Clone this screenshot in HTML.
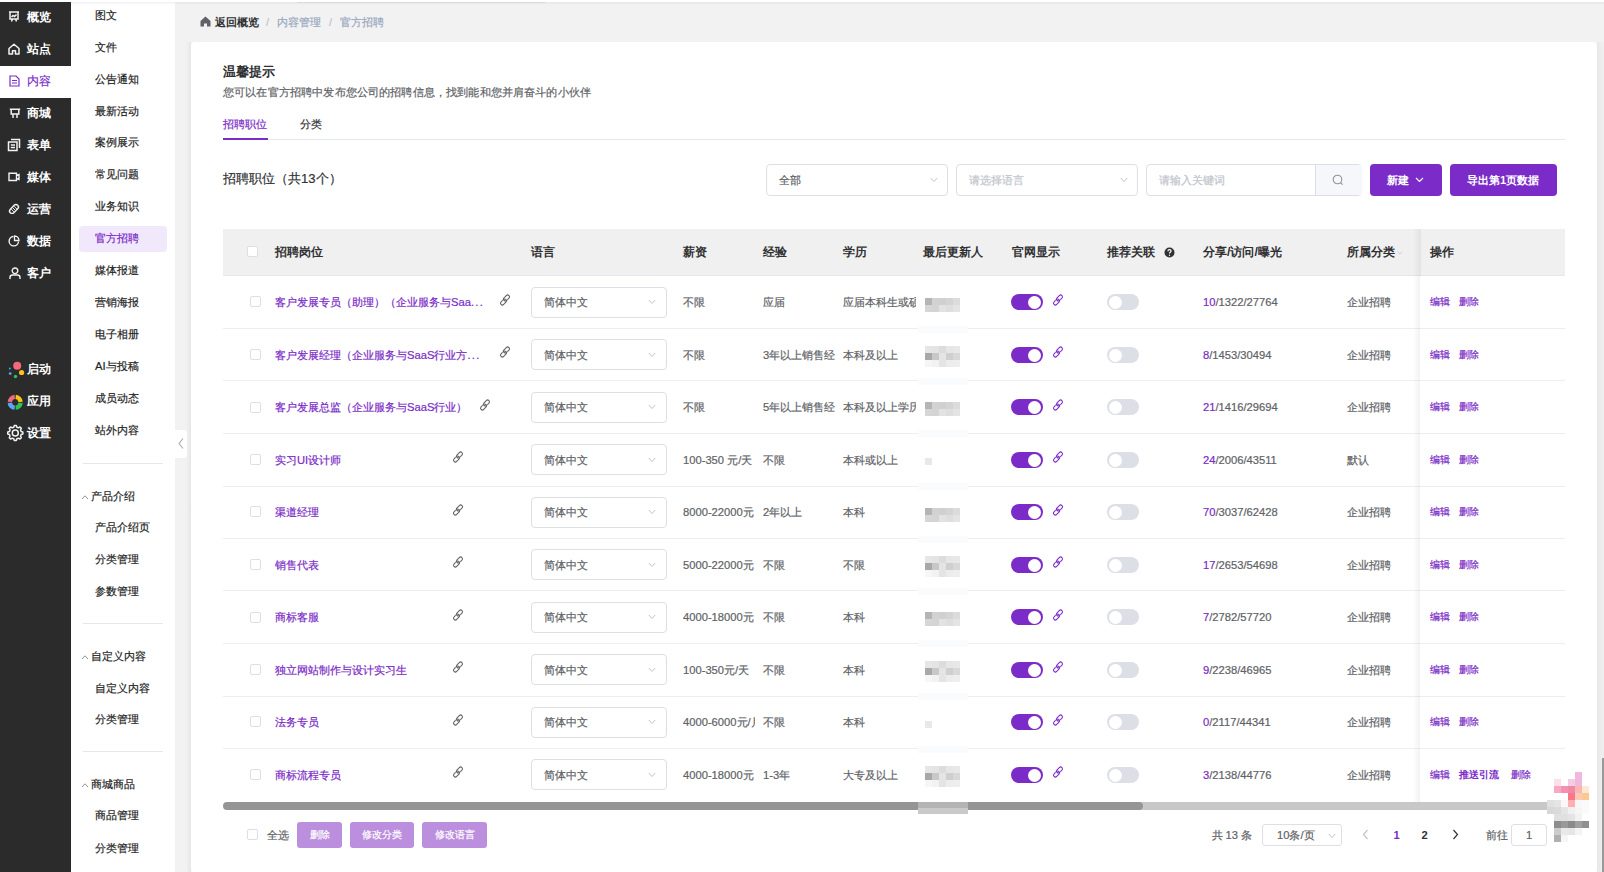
<!DOCTYPE html><html><head><meta charset="utf-8"><style>
html,body{margin:0;padding:0;width:1604px;height:872px;overflow:hidden;background:#f2f2f2;font-family:"Liberation Sans",sans-serif;}
.t{position:absolute;white-space:nowrap;-webkit-text-stroke:0.2px currentColor;}
.r{position:absolute;}
svg{position:absolute;overflow:visible;}
</style></head><body>

<div class="r" style="left:0px;top:0px;width:1604px;height:2px;background:#ffffff;"></div>
<div class="r" style="left:0px;top:2px;width:1604px;height:3px;background:linear-gradient(#e6e6e6,#f2f2f2);"></div>
<div class="r" style="left:297px;top:2px;width:248px;height:1px;background:#dadada;"></div>
<div class="r" style="left:0px;top:2px;width:71px;height:870px;background:#2b2b2b;"></div>
<div class="r" style="left:71px;top:2px;width:104px;height:870px;background:#ffffff;"></div>
<div class="r" style="left:71px;top:2px;width:104px;height:3px;background:linear-gradient(#f0f0f4,#ffffff);"></div>
<div class="r" style="left:0px;top:66px;width:71px;height:32px;background:#ffffff;"></div>
<div class="t" style="left:26.5px;top:7.00px;font-size:12.2px;line-height:20px;color:#ffffff;font-weight:bold;-webkit-text-stroke:0;">概览</div>
<div class="t" style="left:26.5px;top:39.00px;font-size:12.2px;line-height:20px;color:#ffffff;font-weight:bold;-webkit-text-stroke:0;">站点</div>
<div class="t" style="left:26.5px;top:71.00px;font-size:12.2px;line-height:20px;color:#7b2bc7;font-weight:normal;">内容</div>
<div class="t" style="left:26.5px;top:103.00px;font-size:12.2px;line-height:20px;color:#ffffff;font-weight:bold;-webkit-text-stroke:0;">商城</div>
<div class="t" style="left:26.5px;top:135.00px;font-size:12.2px;line-height:20px;color:#ffffff;font-weight:bold;-webkit-text-stroke:0;">表单</div>
<div class="t" style="left:26.5px;top:167.00px;font-size:12.2px;line-height:20px;color:#ffffff;font-weight:bold;-webkit-text-stroke:0;">媒体</div>
<div class="t" style="left:26.5px;top:199.00px;font-size:12.2px;line-height:20px;color:#ffffff;font-weight:bold;-webkit-text-stroke:0;">运营</div>
<div class="t" style="left:26.5px;top:231.00px;font-size:12.2px;line-height:20px;color:#ffffff;font-weight:bold;-webkit-text-stroke:0;">数据</div>
<div class="t" style="left:26.5px;top:263.00px;font-size:12.2px;line-height:20px;color:#ffffff;font-weight:bold;-webkit-text-stroke:0;">客户</div>
<div class="t" style="left:26.5px;top:359.00px;font-size:12.2px;line-height:20px;color:#ffffff;font-weight:bold;-webkit-text-stroke:0;">启动</div>
<div class="t" style="left:26.5px;top:391.00px;font-size:12.2px;line-height:20px;color:#ffffff;font-weight:bold;-webkit-text-stroke:0;">应用</div>
<div class="t" style="left:26.5px;top:423.00px;font-size:12.2px;line-height:20px;color:#ffffff;font-weight:bold;-webkit-text-stroke:0;">设置</div>
<svg style="left:8px;top:11px" width="12" height="12" viewBox="0 0 12 12"><path d="M1 1H11M2 1.5V8H10V1.5M3.5 10.5L4.5 8M8.5 10.5L7.5 8M3.5 6L5 4.5L6.5 5.5L8.5 3.5" fill="none" stroke="#f2f2f2" stroke-width="1.5"/></svg>
<svg style="left:8px;top:43px" width="12" height="12" viewBox="0 0 12 12"><path d="M1 5.5L6 1.3L11 5.5V11H7.5V7.8H4.5V11H1Z" fill="none" stroke="#f2f2f2" stroke-width="1.5" stroke-linejoin="round"/></svg>
<svg style="left:9px;top:75px" width="11" height="12" viewBox="0 0 11 12"><path d="M1 1H7L10 4V11H1Z M3 5.5H8M3 8H8" fill="none" stroke="#7b2bc7" stroke-width="1.2"/></svg>
<svg style="left:9px;top:108px" width="12" height="11" viewBox="0 0 12 11"><path d="M0.8 1.2H11.2M2.2 1.2V6H9.8V1.2M4 6V10M8 6V10" fill="none" stroke="#f2f2f2" stroke-width="1.5"/></svg>
<svg style="left:7px;top:138px" width="14" height="14" viewBox="0 0 14 14"><path d="M4 1.5H12.5V10M1.5 4H10V12.5H1.5ZM3.8 7H8M3.8 9.6H8" fill="none" stroke="#f2f2f2" stroke-width="1.5"/></svg>
<svg style="left:8px;top:172px" width="12" height="10" viewBox="0 0 12 10"><path d="M1 1.2H8.5V8.5H1Z M8.5 3.5L11 2.5V7.5L8.5 6.5" fill="none" stroke="#f2f2f2" stroke-width="1.4"/></svg>
<svg style="left:8px;top:203px" width="12" height="12" viewBox="0 0 12 12"><g transform="rotate(-45 6 6)"><rect x="0.8" y="3.5" width="10.4" height="5" rx="2.5" fill="none" stroke="#f2f2f2" stroke-width="1.4"/><path d="M4 4V8M6 4V8M8 4V8" stroke="#f2f2f2" stroke-width="0.9"/></g></svg>
<svg style="left:8px;top:235px" width="12" height="12" viewBox="0 0 12 12"><path d="M5.5 1.5A4.7 4.7 0 1 0 10.5 6.5" fill="none" stroke="#f2f2f2" stroke-width="1.4"/><path d="M6.5 1V5.5H11A4.5 4.5 0 0 0 6.5 1Z" fill="none" stroke="#f2f2f2" stroke-width="1.3"/></svg>
<svg style="left:9px;top:267px" width="12" height="13" viewBox="0 0 12 13"><circle cx="6" cy="3.8" r="2.8" fill="none" stroke="#f2f2f2" stroke-width="1.4"/><path d="M1 12V10.5Q1 8 3.5 8H8.5Q11 8 11 10.5V12" fill="none" stroke="#f2f2f2" stroke-width="1.4"/></svg>
<svg style="left:0px;top:355px" width="26" height="26" viewBox="0 0 26 26"><circle cx="17.2" cy="10.7" r="4" fill="#f26b7a"/><circle cx="21.6" cy="17.5" r="2.6" fill="#fcc419"/><circle cx="15.5" cy="21.5" r="1.7" fill="#2ec255"/><circle cx="10.2" cy="18.6" r="1.4" fill="#5ba4f5"/><circle cx="9.8" cy="13.5" r="0.9" fill="#20c4f0"/></svg>
<svg style="left:0px;top:388px" width="30" height="30" viewBox="0 0 30 30"><g fill="none" stroke-width="4.4"><path d="M9.82 13.83A5.4 5.4 0 0 1 14.73 8.92" stroke="#f26b7a"/><path d="M15.67 8.92A5.4 5.4 0 0 1 20.58 13.83" stroke="#fcc419"/><path d="M20.58 14.77A5.4 5.4 0 0 1 15.67 19.68" stroke="#2ec255"/><path d="M14.73 19.68A5.4 5.4 0 0 1 9.82 14.77" stroke="#5ba4f5"/></g></svg>
<svg style="left:0px;top:418px" width="30" height="30" viewBox="0 0 30 30"><polygon points="22.90,15.00 22.83,15.99 21.10,16.55 20.84,17.30 20.50,18.00 21.33,19.63 20.67,20.37 19.93,21.03 18.30,20.20 17.60,20.54 16.85,20.80 16.29,22.53 15.30,22.60 14.31,22.53 13.75,20.80 13.00,20.54 12.30,20.20 10.67,21.03 9.93,20.37 9.27,19.63 10.10,18.00 9.76,17.30 9.50,16.55 7.77,15.99 7.70,15.00 7.77,14.01 9.50,13.45 9.76,12.70 10.10,12.00 9.27,10.37 9.93,9.63 10.67,8.97 12.30,9.80 13.00,9.46 13.75,9.20 14.31,7.47 15.30,7.40 16.29,7.47 16.85,9.20 17.60,9.46 18.30,9.80 19.93,8.97 20.67,9.63 21.33,10.37 20.50,12.00 20.84,12.70 21.10,13.45 22.83,14.01" fill="none" stroke="#f2f2f2" stroke-width="1.5" stroke-linejoin="round"/><circle cx="15.3" cy="15" r="3" fill="none" stroke="#f2f2f2" stroke-width="1.5"/></svg>
<div class="r" style="left:79px;top:226px;width:88px;height:26px;background:#f1e9fb;border-radius:4px;"></div>
<div class="t" style="left:95px;top:4.80px;font-size:11.2px;line-height:20px;color:#1f1f1f;font-weight:normal;">图文</div>
<div class="t" style="left:95px;top:36.70px;font-size:11.2px;line-height:20px;color:#1f1f1f;font-weight:normal;">文件</div>
<div class="t" style="left:95px;top:68.60px;font-size:11.2px;line-height:20px;color:#1f1f1f;font-weight:normal;">公告通知</div>
<div class="t" style="left:95px;top:100.50px;font-size:11.2px;line-height:20px;color:#1f1f1f;font-weight:normal;">最新活动</div>
<div class="t" style="left:95px;top:132.40px;font-size:11.2px;line-height:20px;color:#1f1f1f;font-weight:normal;">案例展示</div>
<div class="t" style="left:95px;top:164.30px;font-size:11.2px;line-height:20px;color:#1f1f1f;font-weight:normal;">常见问题</div>
<div class="t" style="left:95px;top:196.20px;font-size:11.2px;line-height:20px;color:#1f1f1f;font-weight:normal;">业务知识</div>
<div class="t" style="left:95px;top:228.10px;font-size:11.2px;line-height:20px;color:#7b2bc7;font-weight:normal;">官方招聘</div>
<div class="t" style="left:95px;top:260.00px;font-size:11.2px;line-height:20px;color:#1f1f1f;font-weight:normal;">媒体报道</div>
<div class="t" style="left:95px;top:291.90px;font-size:11.2px;line-height:20px;color:#1f1f1f;font-weight:normal;">营销海报</div>
<div class="t" style="left:95px;top:323.80px;font-size:11.2px;line-height:20px;color:#1f1f1f;font-weight:normal;">电子相册</div>
<div class="t" style="left:95px;top:355.70px;font-size:11.2px;line-height:20px;color:#1f1f1f;font-weight:normal;">AI与投稿</div>
<div class="t" style="left:95px;top:387.60px;font-size:11.2px;line-height:20px;color:#1f1f1f;font-weight:normal;">成员动态</div>
<div class="t" style="left:95px;top:419.50px;font-size:11.2px;line-height:20px;color:#1f1f1f;font-weight:normal;">站外内容</div>
<div class="r" style="left:83px;top:463px;width:80px;height:1px;background:#e4e7ed;"></div>
<div class="r" style="left:83px;top:623px;width:80px;height:1px;background:#e4e7ed;"></div>
<div class="r" style="left:83px;top:751px;width:80px;height:1px;background:#e4e7ed;"></div>
<div class="t" style="left:90.6px;top:486.00px;font-size:11.2px;line-height:20px;color:#1f1f1f;font-weight:normal;">产品介绍</div>
<svg style="left:81px;top:494px" width="8" height="6" viewBox="0 0 8 6"><path d="M1 5L4 1.8L7 5" fill="none" stroke="#909399" stroke-width="1"/></svg>
<div class="t" style="left:90.6px;top:646.00px;font-size:11.2px;line-height:20px;color:#1f1f1f;font-weight:normal;">自定义内容</div>
<svg style="left:81px;top:654px" width="8" height="6" viewBox="0 0 8 6"><path d="M1 5L4 1.8L7 5" fill="none" stroke="#909399" stroke-width="1"/></svg>
<div class="t" style="left:90.6px;top:774.00px;font-size:11.2px;line-height:20px;color:#1f1f1f;font-weight:normal;">商城商品</div>
<svg style="left:81px;top:782px" width="8" height="6" viewBox="0 0 8 6"><path d="M1 5L4 1.8L7 5" fill="none" stroke="#909399" stroke-width="1"/></svg>
<div class="t" style="left:95px;top:517.00px;font-size:11.2px;line-height:20px;color:#1f1f1f;font-weight:normal;">产品介绍页</div>
<div class="t" style="left:95px;top:549.00px;font-size:11.2px;line-height:20px;color:#1f1f1f;font-weight:normal;">分类管理</div>
<div class="t" style="left:95px;top:581.00px;font-size:11.2px;line-height:20px;color:#1f1f1f;font-weight:normal;">参数管理</div>
<div class="t" style="left:95px;top:677.50px;font-size:11.2px;line-height:20px;color:#1f1f1f;font-weight:normal;">自定义内容</div>
<div class="t" style="left:95px;top:709.00px;font-size:11.2px;line-height:20px;color:#1f1f1f;font-weight:normal;">分类管理</div>
<div class="t" style="left:95px;top:805.00px;font-size:11.2px;line-height:20px;color:#1f1f1f;font-weight:normal;">商品管理</div>
<div class="t" style="left:95px;top:837.50px;font-size:11.2px;line-height:20px;color:#1f1f1f;font-weight:normal;">分类管理</div>
<div class="r" style="left:186px;top:42px;width:5px;height:830px;background:linear-gradient(90deg,#f2f2f2,#e6e6e6);"></div>
<div class="r" style="left:175px;top:430px;width:12px;height:28px;background:#ffffff;border-radius:0 3px 3px 0;"></div>
<svg style="left:177px;top:437px" width="8" height="13" viewBox="0 0 8 13"><path d="M6 1.5L2 6.5L6 11.5" fill="none" stroke="#a8abb2" stroke-width="1.1"/></svg>
<svg style="left:200px;top:16px" width="11" height="11" viewBox="0 0 11 11"><path d="M0.5 5L5.5 0.5L10.5 5V10.5H7V7.5H4V10.5H0.5Z" fill="#606266"/></svg>
<div class="t" style="left:215px;top:12.00px;font-size:11.2px;line-height:20px;color:#303133;font-weight:bold;-webkit-text-stroke:0;">返回概览</div>
<div class="t" style="left:266px;top:12.00px;font-size:11px;line-height:20px;color:#c0c4cc;font-weight:normal;">/</div>
<div class="t" style="left:277px;top:12.00px;font-size:11.2px;line-height:20px;color:#97a8be;font-weight:normal;">内容管理</div>
<div class="t" style="left:329px;top:12.00px;font-size:11px;line-height:20px;color:#c0c4cc;font-weight:normal;">/</div>
<div class="t" style="left:340px;top:12.00px;font-size:11.2px;line-height:20px;color:#97a8be;font-weight:normal;">官方招聘</div>
<div class="r" style="left:191px;top:42px;width:1406px;height:831px;background:#ffffff;border-radius:4px;"></div>
<div class="r" style="left:1597px;top:42px;width:7px;height:830px;background:linear-gradient(90deg,#e8e8e8,#f0f0f0);"></div>
<div class="r" style="left:1602px;top:758px;width:2px;height:114px;background:#9a9a9a;"></div>
<div class="t" style="left:223px;top:62.00px;font-size:13.1px;line-height:20px;color:#303133;font-weight:bold;-webkit-text-stroke:0;">温馨提示</div>
<div class="t" style="left:223px;top:82.00px;font-size:11.2px;line-height:20px;color:#606266;font-weight:normal;transform:scaleX(1.014);transform-origin:0 0;">您可以在官方招聘中发布您公司的招聘信息，找到能和您并肩奋斗的小伙伴</div>
<div class="t" style="left:223px;top:114.00px;font-size:11.2px;line-height:20px;color:#7b2bc7;font-weight:normal;">招聘职位</div>
<div class="t" style="left:300px;top:114.00px;font-size:11.2px;line-height:20px;color:#303133;font-weight:normal;">分类</div>
<div class="r" style="left:223px;top:139px;width:1342px;height:1px;background:#e4e7ed;"></div>
<div class="r" style="left:223px;top:138px;width:45px;height:2px;background:#7b2bc7;"></div>
<div class="t" style="left:223px;top:169.00px;font-size:13.1px;line-height:20px;color:#303133;font-weight:normal;">招聘职位（共13个）</div>
<div class="r" style="left:766px;top:164px;width:182px;height:32px;background:#fff;border:1px solid #dcdfe6;border-radius:4px;box-sizing:border-box;"></div>
<div class="t" style="left:779px;top:170.00px;font-size:11.2px;line-height:20px;color:#606266;font-weight:normal;">全部</div>
<svg style="left:930px;top:177px" width="8" height="6" viewBox="0 0 8 6"><path d="M0.8 1L4 4.5L7.2 1" fill="none" stroke="#c0c4cc" stroke-width="1"/></svg>
<div class="r" style="left:956px;top:164px;width:182px;height:32px;background:#fff;border:1px solid #dcdfe6;border-radius:4px;box-sizing:border-box;"></div>
<div class="t" style="left:969px;top:170.00px;font-size:11.2px;line-height:20px;color:#c0c4cc;font-weight:normal;">请选择语言</div>
<svg style="left:1120px;top:177px" width="8" height="6" viewBox="0 0 8 6"><path d="M0.8 1L4 4.5L7.2 1" fill="none" stroke="#c0c4cc" stroke-width="1"/></svg>
<div class="r" style="left:1146px;top:164px;width:216px;height:32px;background:#fff;border:1px solid #dcdfe6;border-radius:4px;box-sizing:border-box;"></div>
<div class="r" style="left:1315px;top:165px;width:46px;height:30px;background:#f5f7fa;border-left:1px solid #dcdfe6;border-radius:0 3px 3px 0;"></div>
<div class="t" style="left:1159px;top:170.00px;font-size:11.2px;line-height:20px;color:#c0c4cc;font-weight:normal;">请输入关键词</div>
<svg style="left:1332px;top:174px" width="12" height="12" viewBox="0 0 12 12"><circle cx="5.5" cy="5.5" r="4.3" fill="none" stroke="#909399" stroke-width="1.1"/><path d="M8.6 8.6L10.6 10.6" stroke="#909399" stroke-width="1.1"/></svg>
<div class="r" style="left:1370px;top:164px;width:72px;height:32px;background:#7b2bc7;border-radius:4px;"></div>
<div class="t" style="left:1387px;top:170.00px;font-size:11.2px;line-height:20px;color:#fff;font-weight:bold;-webkit-text-stroke:0;">新建</div>
<svg style="left:1415px;top:177px" width="9" height="6" viewBox="0 0 9 6"><path d="M1 1L4.5 4.5L8 1" fill="none" stroke="#fff" stroke-width="1.2"/></svg>
<div class="r" style="left:1450px;top:164px;width:107px;height:32px;background:#7b2bc7;border-radius:4px;"></div>
<div class="t" style="left:1467px;top:170.00px;font-size:11.2px;line-height:20px;color:#fff;font-weight:bold;-webkit-text-stroke:0;">导出第1页数据</div>
<div class="r" style="left:223px;top:229px;width:1342px;height:47px;background:#f0f0f0;"></div>
<div class="r" style="left:223px;top:275px;width:1342px;height:1px;background:#e4e7ed;"></div>
<div class="r" style="left:247px;top:246px;width:11px;height:11px;background:#fff;border:1px solid #dcdfe6;border-radius:2px;box-sizing:border-box;"></div>
<div class="t" style="left:275px;top:242.00px;font-size:12.2px;line-height:20px;color:#303133;font-weight:bold;-webkit-text-stroke:0;">招聘岗位</div>
<div class="t" style="left:531px;top:242.00px;font-size:12.2px;line-height:20px;color:#303133;font-weight:bold;-webkit-text-stroke:0;">语言</div>
<div class="t" style="left:683px;top:242.00px;font-size:12.2px;line-height:20px;color:#303133;font-weight:bold;-webkit-text-stroke:0;">薪资</div>
<div class="t" style="left:763px;top:242.00px;font-size:12.2px;line-height:20px;color:#303133;font-weight:bold;-webkit-text-stroke:0;">经验</div>
<div class="t" style="left:843px;top:242.00px;font-size:12.2px;line-height:20px;color:#303133;font-weight:bold;-webkit-text-stroke:0;">学历</div>
<div class="t" style="left:923px;top:242.00px;font-size:12.2px;line-height:20px;color:#303133;font-weight:bold;-webkit-text-stroke:0;">最后更新人</div>
<div class="t" style="left:1012px;top:242.00px;font-size:12.2px;line-height:20px;color:#303133;font-weight:bold;-webkit-text-stroke:0;">官网显示</div>
<div class="t" style="left:1107px;top:242.00px;font-size:12.2px;line-height:20px;color:#303133;font-weight:bold;-webkit-text-stroke:0;">推荐关联</div>
<div class="t" style="left:1203px;top:242.00px;font-size:12.2px;line-height:20px;color:#303133;font-weight:bold;-webkit-text-stroke:0;">分享/访问/曝光</div>
<div class="t" style="left:1347px;top:242.00px;font-size:12.2px;line-height:20px;color:#303133;font-weight:bold;-webkit-text-stroke:0;">所属分类</div>
<div class="t" style="left:1430px;top:242.00px;font-size:12.2px;line-height:20px;color:#303133;font-weight:bold;-webkit-text-stroke:0;">操作</div>
<svg style="left:1164px;top:247px" width="11" height="11" viewBox="0 0 11 11"><circle cx="5.5" cy="5.5" r="5" fill="#303133"/><path d="M3.9 4.2Q3.9 2.6 5.5 2.6Q7.1 2.6 7.1 4Q7.1 4.9 6.1 5.4Q5.5 5.7 5.5 6.5" fill="none" stroke="#fff" stroke-width="1.2"/><circle cx="5.5" cy="8.2" r="0.7" fill="#fff"/></svg>
<svg style="left:1397px;top:250px" width="6" height="6" viewBox="0 0 8 6"><path d="M0.8 1L4 4.5L7.2 1" fill="none" stroke="#c0c4cc" stroke-width="1"/></svg>
<div class="r" style="left:918px;top:276px;width:50px;height:526px;background:#ffffff;"></div>
<div class="r" style="left:223px;top:328px;width:695px;height:1px;background:#ebeef5;"></div>
<div class="r" style="left:968px;top:328px;width:597px;height:1px;background:#ebeef5;"></div>
<div class="r" style="left:918px;top:326px;width:50px;height:7px;background:#fafbfd;"></div>
<div class="r" style="left:250px;top:296px;width:11px;height:11px;background:#fff;border:1px solid #dcdfe6;border-radius:2px;box-sizing:border-box;"></div>
<div class="t" style="left:275px;top:292.00px;font-size:11.2px;line-height:20px;color:#7b2bc7;font-weight:normal;">客户发展专员（助理）（企业服务与Saa<span style="letter-spacing:1.3px">...</span></div>
<svg style="left:499px;top:293.75px" width="12" height="12" viewBox="0 0 12 12"><g transform="rotate(-45 6 6)" fill="none" stroke="#606266" stroke-width="1.05" stroke-linecap="round"><path d="M8.4 7.45H10.1A1.85 1.85 0 0 0 10.1 3.75H6.9A1.85 1.85 0 0 0 6.9 7.45H7.2"/><path d="M3.6 4.55H1.9A1.85 1.85 0 0 0 1.9 8.25H5.1A1.85 1.85 0 0 0 5.1 4.55H4.8"/></g></svg>
<div class="r" style="left:531px;top:287px;width:136px;height:31px;background:#fff;border:1px solid #dcdfe6;border-radius:4px;box-sizing:border-box;"></div>
<div class="t" style="left:544px;top:292.00px;font-size:11.2px;line-height:20px;color:#606266;font-weight:normal;">简体中文</div>
<svg style="left:648px;top:299.0px" width="8" height="6" viewBox="0 0 8 6"><path d="M0.8 1L4 4.5L7.2 1" fill="none" stroke="#c0c4cc" stroke-width="1"/></svg>
<div class="t" style="left:683px;top:292.00px;width:72px;overflow:hidden;font-size:11.2px;line-height:20px;color:#606266">不限</div>
<div class="t" style="left:763px;top:292.00px;width:72px;overflow:hidden;font-size:11.2px;line-height:20px;color:#606266">应届</div>
<div class="t" style="left:843px;top:292.00px;width:73px;overflow:hidden;font-size:11.2px;line-height:20px;color:#606266">应届本科生或硕</div>
<div class="r" style="left:924.5px;top:298px;width:7px;height:7px;background:#b5b5b5;"></div>
<div class="r" style="left:931.5px;top:298px;width:7px;height:7px;background:#d2d2d2;"></div>
<div class="r" style="left:938.5px;top:298px;width:7px;height:7px;background:#d0d0d0;"></div>
<div class="r" style="left:945.5px;top:298px;width:7px;height:7px;background:#d4d4d4;"></div>
<div class="r" style="left:952.5px;top:298px;width:7px;height:7px;background:#dcdcdc;"></div>
<div class="r" style="left:924.5px;top:305px;width:7px;height:7px;background:#d6d6d6;"></div>
<div class="r" style="left:931.5px;top:305px;width:7px;height:7px;background:#d4d4d4;"></div>
<div class="r" style="left:938.5px;top:305px;width:7px;height:7px;background:#e2e2e2;"></div>
<div class="r" style="left:945.5px;top:305px;width:7px;height:7px;background:#dedede;"></div>
<div class="r" style="left:952.5px;top:305px;width:7px;height:7px;background:#e4e4e4;"></div>
<div class="r" style="left:1011px;top:294px;width:32px;height:16px;background:#7b2bc7;border-radius:8px;"></div>
<div class="r" style="left:1028px;top:295.5px;width:13px;height:13px;background:#fff;border-radius:50%;"></div>
<svg style="left:1052px;top:293.75px" width="12" height="12" viewBox="0 0 12 12"><g transform="rotate(-45 6 6)" fill="none" stroke="#7b2bc7" stroke-width="1.05" stroke-linecap="round"><path d="M8.4 7.45H10.1A1.85 1.85 0 0 0 10.1 3.75H6.9A1.85 1.85 0 0 0 6.9 7.45H7.2"/><path d="M3.6 4.55H1.9A1.85 1.85 0 0 0 1.9 8.25H5.1A1.85 1.85 0 0 0 5.1 4.55H4.8"/></g></svg>
<div class="r" style="left:1107px;top:294px;width:32px;height:16px;background:#dcdfe6;border-radius:8px;"></div>
<div class="r" style="left:1108.5px;top:295.5px;width:13px;height:13px;background:#fff;border-radius:50%;"></div>
<div class="t" style="left:1203px;top:292.00px;font-size:11.2px;line-height:20px;color:#606266;font-weight:normal;"><span style="color:#7b2bc7">10</span>/1322/27764</div>
<div class="t" style="left:1347px;top:292.00px;font-size:11.2px;line-height:20px;color:#606266;font-weight:normal;">企业招聘</div>
<div class="r" style="left:223px;top:380px;width:695px;height:1px;background:#ebeef5;"></div>
<div class="r" style="left:968px;top:380px;width:597px;height:1px;background:#ebeef5;"></div>
<div class="r" style="left:918px;top:378px;width:50px;height:7px;background:#fafbfd;"></div>
<div class="r" style="left:250px;top:349px;width:11px;height:11px;background:#fff;border:1px solid #dcdfe6;border-radius:2px;box-sizing:border-box;"></div>
<div class="t" style="left:275px;top:344.50px;font-size:11.2px;line-height:20px;color:#7b2bc7;font-weight:normal;">客户发展经理（企业服务与SaaS行业方<span style="letter-spacing:1.3px">...</span></div>
<svg style="left:499px;top:346.25px" width="12" height="12" viewBox="0 0 12 12"><g transform="rotate(-45 6 6)" fill="none" stroke="#606266" stroke-width="1.05" stroke-linecap="round"><path d="M8.4 7.45H10.1A1.85 1.85 0 0 0 10.1 3.75H6.9A1.85 1.85 0 0 0 6.9 7.45H7.2"/><path d="M3.6 4.55H1.9A1.85 1.85 0 0 0 1.9 8.25H5.1A1.85 1.85 0 0 0 5.1 4.55H4.8"/></g></svg>
<div class="r" style="left:531px;top:339px;width:136px;height:31px;background:#fff;border:1px solid #dcdfe6;border-radius:4px;box-sizing:border-box;"></div>
<div class="t" style="left:544px;top:344.50px;font-size:11.2px;line-height:20px;color:#606266;font-weight:normal;">简体中文</div>
<svg style="left:648px;top:351.5px" width="8" height="6" viewBox="0 0 8 6"><path d="M0.8 1L4 4.5L7.2 1" fill="none" stroke="#c0c4cc" stroke-width="1"/></svg>
<div class="t" style="left:683px;top:344.50px;width:72px;overflow:hidden;font-size:11.2px;line-height:20px;color:#606266">不限</div>
<div class="t" style="left:763px;top:344.50px;width:72px;overflow:hidden;font-size:11.2px;line-height:20px;color:#606266">3年以上销售经</div>
<div class="t" style="left:843px;top:344.50px;width:73px;overflow:hidden;font-size:11.2px;line-height:20px;color:#606266">本科及以上</div>
<div class="r" style="left:924.5px;top:346px;width:7px;height:7px;background:#e6e6e6;"></div>
<div class="r" style="left:931.5px;top:346px;width:7px;height:7px;background:#e4e4e4;"></div>
<div class="r" style="left:938.5px;top:346px;width:7px;height:7px;background:#dcdcdc;"></div>
<div class="r" style="left:945.5px;top:346px;width:7px;height:7px;background:#e6e6e6;"></div>
<div class="r" style="left:952.5px;top:346px;width:7px;height:7px;background:#e8e8e8;"></div>
<div class="r" style="left:924.5px;top:353px;width:7px;height:7px;background:#a8a8a8;"></div>
<div class="r" style="left:931.5px;top:353px;width:7px;height:7px;background:#c8c8c8;"></div>
<div class="r" style="left:938.5px;top:353px;width:7px;height:7px;background:#e4e4e4;"></div>
<div class="r" style="left:945.5px;top:353px;width:7px;height:7px;background:#cfcfcf;"></div>
<div class="r" style="left:952.5px;top:353px;width:7px;height:7px;background:#d8d8d8;"></div>
<div class="r" style="left:924.5px;top:360px;width:7px;height:7px;background:#f6f6f6;"></div>
<div class="r" style="left:931.5px;top:360px;width:7px;height:7px;background:#f2f2f2;"></div>
<div class="r" style="left:938.5px;top:360px;width:7px;height:7px;background:#e4e4e4;"></div>
<div class="r" style="left:945.5px;top:360px;width:7px;height:7px;background:#ececec;"></div>
<div class="r" style="left:952.5px;top:360px;width:7px;height:7px;background:#eeeeee;"></div>
<div class="r" style="left:1011px;top:347px;width:32px;height:16px;background:#7b2bc7;border-radius:8px;"></div>
<div class="r" style="left:1028px;top:348.5px;width:13px;height:13px;background:#fff;border-radius:50%;"></div>
<svg style="left:1052px;top:346.25px" width="12" height="12" viewBox="0 0 12 12"><g transform="rotate(-45 6 6)" fill="none" stroke="#7b2bc7" stroke-width="1.05" stroke-linecap="round"><path d="M8.4 7.45H10.1A1.85 1.85 0 0 0 10.1 3.75H6.9A1.85 1.85 0 0 0 6.9 7.45H7.2"/><path d="M3.6 4.55H1.9A1.85 1.85 0 0 0 1.9 8.25H5.1A1.85 1.85 0 0 0 5.1 4.55H4.8"/></g></svg>
<div class="r" style="left:1107px;top:347px;width:32px;height:16px;background:#dcdfe6;border-radius:8px;"></div>
<div class="r" style="left:1108.5px;top:348.5px;width:13px;height:13px;background:#fff;border-radius:50%;"></div>
<div class="t" style="left:1203px;top:344.50px;font-size:11.2px;line-height:20px;color:#606266;font-weight:normal;"><span style="color:#7b2bc7">8</span>/1453/30494</div>
<div class="t" style="left:1347px;top:344.50px;font-size:11.2px;line-height:20px;color:#606266;font-weight:normal;">企业招聘</div>
<div class="r" style="left:223px;top:433px;width:695px;height:1px;background:#ebeef5;"></div>
<div class="r" style="left:968px;top:433px;width:597px;height:1px;background:#ebeef5;"></div>
<div class="r" style="left:918px;top:430px;width:50px;height:7px;background:#fafbfd;"></div>
<div class="r" style="left:250px;top:402px;width:11px;height:11px;background:#fff;border:1px solid #dcdfe6;border-radius:2px;box-sizing:border-box;"></div>
<div class="t" style="left:275px;top:397.00px;font-size:11.2px;line-height:20px;color:#7b2bc7;font-weight:normal;">客户发展总监（企业服务与SaaS行业）</div>
<svg style="left:479px;top:398.75px" width="12" height="12" viewBox="0 0 12 12"><g transform="rotate(-45 6 6)" fill="none" stroke="#606266" stroke-width="1.05" stroke-linecap="round"><path d="M8.4 7.45H10.1A1.85 1.85 0 0 0 10.1 3.75H6.9A1.85 1.85 0 0 0 6.9 7.45H7.2"/><path d="M3.6 4.55H1.9A1.85 1.85 0 0 0 1.9 8.25H5.1A1.85 1.85 0 0 0 5.1 4.55H4.8"/></g></svg>
<div class="r" style="left:531px;top:392px;width:136px;height:31px;background:#fff;border:1px solid #dcdfe6;border-radius:4px;box-sizing:border-box;"></div>
<div class="t" style="left:544px;top:397.00px;font-size:11.2px;line-height:20px;color:#606266;font-weight:normal;">简体中文</div>
<svg style="left:648px;top:404.0px" width="8" height="6" viewBox="0 0 8 6"><path d="M0.8 1L4 4.5L7.2 1" fill="none" stroke="#c0c4cc" stroke-width="1"/></svg>
<div class="t" style="left:683px;top:397.00px;width:72px;overflow:hidden;font-size:11.2px;line-height:20px;color:#606266">不限</div>
<div class="t" style="left:763px;top:397.00px;width:72px;overflow:hidden;font-size:11.2px;line-height:20px;color:#606266">5年以上销售经</div>
<div class="t" style="left:843px;top:397.00px;width:73px;overflow:hidden;font-size:11.2px;line-height:20px;color:#606266">本科及以上学历</div>
<div class="r" style="left:924.5px;top:402px;width:7px;height:7px;background:#b5b5b5;"></div>
<div class="r" style="left:931.5px;top:402px;width:7px;height:7px;background:#d2d2d2;"></div>
<div class="r" style="left:938.5px;top:402px;width:7px;height:7px;background:#d0d0d0;"></div>
<div class="r" style="left:945.5px;top:402px;width:7px;height:7px;background:#d4d4d4;"></div>
<div class="r" style="left:952.5px;top:402px;width:7px;height:7px;background:#dcdcdc;"></div>
<div class="r" style="left:924.5px;top:409px;width:7px;height:7px;background:#d6d6d6;"></div>
<div class="r" style="left:931.5px;top:409px;width:7px;height:7px;background:#d4d4d4;"></div>
<div class="r" style="left:938.5px;top:409px;width:7px;height:7px;background:#e2e2e2;"></div>
<div class="r" style="left:945.5px;top:409px;width:7px;height:7px;background:#dedede;"></div>
<div class="r" style="left:952.5px;top:409px;width:7px;height:7px;background:#e4e4e4;"></div>
<div class="r" style="left:1011px;top:399px;width:32px;height:16px;background:#7b2bc7;border-radius:8px;"></div>
<div class="r" style="left:1028px;top:400.5px;width:13px;height:13px;background:#fff;border-radius:50%;"></div>
<svg style="left:1052px;top:398.75px" width="12" height="12" viewBox="0 0 12 12"><g transform="rotate(-45 6 6)" fill="none" stroke="#7b2bc7" stroke-width="1.05" stroke-linecap="round"><path d="M8.4 7.45H10.1A1.85 1.85 0 0 0 10.1 3.75H6.9A1.85 1.85 0 0 0 6.9 7.45H7.2"/><path d="M3.6 4.55H1.9A1.85 1.85 0 0 0 1.9 8.25H5.1A1.85 1.85 0 0 0 5.1 4.55H4.8"/></g></svg>
<div class="r" style="left:1107px;top:399px;width:32px;height:16px;background:#dcdfe6;border-radius:8px;"></div>
<div class="r" style="left:1108.5px;top:400.5px;width:13px;height:13px;background:#fff;border-radius:50%;"></div>
<div class="t" style="left:1203px;top:397.00px;font-size:11.2px;line-height:20px;color:#606266;font-weight:normal;"><span style="color:#7b2bc7">21</span>/1416/29694</div>
<div class="t" style="left:1347px;top:397.00px;font-size:11.2px;line-height:20px;color:#606266;font-weight:normal;">企业招聘</div>
<div class="r" style="left:223px;top:486px;width:695px;height:1px;background:#ebeef5;"></div>
<div class="r" style="left:968px;top:486px;width:597px;height:1px;background:#ebeef5;"></div>
<div class="r" style="left:918px;top:483px;width:50px;height:7px;background:#fafbfd;"></div>
<div class="r" style="left:250px;top:454px;width:11px;height:11px;background:#fff;border:1px solid #dcdfe6;border-radius:2px;box-sizing:border-box;"></div>
<div class="t" style="left:275px;top:449.50px;font-size:11.2px;line-height:20px;color:#7b2bc7;font-weight:normal;">实习UI设计师</div>
<svg style="left:452px;top:451.25px" width="12" height="12" viewBox="0 0 12 12"><g transform="rotate(-45 6 6)" fill="none" stroke="#606266" stroke-width="1.05" stroke-linecap="round"><path d="M8.4 7.45H10.1A1.85 1.85 0 0 0 10.1 3.75H6.9A1.85 1.85 0 0 0 6.9 7.45H7.2"/><path d="M3.6 4.55H1.9A1.85 1.85 0 0 0 1.9 8.25H5.1A1.85 1.85 0 0 0 5.1 4.55H4.8"/></g></svg>
<div class="r" style="left:531px;top:444px;width:136px;height:31px;background:#fff;border:1px solid #dcdfe6;border-radius:4px;box-sizing:border-box;"></div>
<div class="t" style="left:544px;top:449.50px;font-size:11.2px;line-height:20px;color:#606266;font-weight:normal;">简体中文</div>
<svg style="left:648px;top:456.5px" width="8" height="6" viewBox="0 0 8 6"><path d="M0.8 1L4 4.5L7.2 1" fill="none" stroke="#c0c4cc" stroke-width="1"/></svg>
<div class="t" style="left:683px;top:449.50px;width:72px;overflow:hidden;font-size:11.2px;line-height:20px;color:#606266">100-350 元/天</div>
<div class="t" style="left:763px;top:449.50px;width:72px;overflow:hidden;font-size:11.2px;line-height:20px;color:#606266">不限</div>
<div class="t" style="left:843px;top:449.50px;width:73px;overflow:hidden;font-size:11.2px;line-height:20px;color:#606266">本科或以上</div>
<div class="r" style="left:924.5px;top:458px;width:7px;height:7px;background:#e8e8e8;"></div>
<div class="r" style="left:1011px;top:452px;width:32px;height:16px;background:#7b2bc7;border-radius:8px;"></div>
<div class="r" style="left:1028px;top:453.5px;width:13px;height:13px;background:#fff;border-radius:50%;"></div>
<svg style="left:1052px;top:451.25px" width="12" height="12" viewBox="0 0 12 12"><g transform="rotate(-45 6 6)" fill="none" stroke="#7b2bc7" stroke-width="1.05" stroke-linecap="round"><path d="M8.4 7.45H10.1A1.85 1.85 0 0 0 10.1 3.75H6.9A1.85 1.85 0 0 0 6.9 7.45H7.2"/><path d="M3.6 4.55H1.9A1.85 1.85 0 0 0 1.9 8.25H5.1A1.85 1.85 0 0 0 5.1 4.55H4.8"/></g></svg>
<div class="r" style="left:1107px;top:452px;width:32px;height:16px;background:#dcdfe6;border-radius:8px;"></div>
<div class="r" style="left:1108.5px;top:453.5px;width:13px;height:13px;background:#fff;border-radius:50%;"></div>
<div class="t" style="left:1203px;top:449.50px;font-size:11.2px;line-height:20px;color:#606266;font-weight:normal;"><span style="color:#7b2bc7">24</span>/2006/43511</div>
<div class="t" style="left:1347px;top:449.50px;font-size:11.2px;line-height:20px;color:#606266;font-weight:normal;">默认</div>
<div class="r" style="left:223px;top:538px;width:695px;height:1px;background:#ebeef5;"></div>
<div class="r" style="left:968px;top:538px;width:597px;height:1px;background:#ebeef5;"></div>
<div class="r" style="left:918px;top:536px;width:50px;height:7px;background:#fafbfd;"></div>
<div class="r" style="left:250px;top:506px;width:11px;height:11px;background:#fff;border:1px solid #dcdfe6;border-radius:2px;box-sizing:border-box;"></div>
<div class="t" style="left:275px;top:502.00px;font-size:11.2px;line-height:20px;color:#7b2bc7;font-weight:normal;">渠道经理</div>
<svg style="left:452px;top:503.75px" width="12" height="12" viewBox="0 0 12 12"><g transform="rotate(-45 6 6)" fill="none" stroke="#606266" stroke-width="1.05" stroke-linecap="round"><path d="M8.4 7.45H10.1A1.85 1.85 0 0 0 10.1 3.75H6.9A1.85 1.85 0 0 0 6.9 7.45H7.2"/><path d="M3.6 4.55H1.9A1.85 1.85 0 0 0 1.9 8.25H5.1A1.85 1.85 0 0 0 5.1 4.55H4.8"/></g></svg>
<div class="r" style="left:531px;top:497px;width:136px;height:31px;background:#fff;border:1px solid #dcdfe6;border-radius:4px;box-sizing:border-box;"></div>
<div class="t" style="left:544px;top:502.00px;font-size:11.2px;line-height:20px;color:#606266;font-weight:normal;">简体中文</div>
<svg style="left:648px;top:509.0px" width="8" height="6" viewBox="0 0 8 6"><path d="M0.8 1L4 4.5L7.2 1" fill="none" stroke="#c0c4cc" stroke-width="1"/></svg>
<div class="t" style="left:683px;top:502.00px;width:72px;overflow:hidden;font-size:11.2px;line-height:20px;color:#606266">8000-22000元</div>
<div class="t" style="left:763px;top:502.00px;width:72px;overflow:hidden;font-size:11.2px;line-height:20px;color:#606266">2年以上</div>
<div class="t" style="left:843px;top:502.00px;width:73px;overflow:hidden;font-size:11.2px;line-height:20px;color:#606266">本科</div>
<div class="r" style="left:924.5px;top:508px;width:7px;height:7px;background:#b5b5b5;"></div>
<div class="r" style="left:931.5px;top:508px;width:7px;height:7px;background:#d2d2d2;"></div>
<div class="r" style="left:938.5px;top:508px;width:7px;height:7px;background:#d0d0d0;"></div>
<div class="r" style="left:945.5px;top:508px;width:7px;height:7px;background:#d4d4d4;"></div>
<div class="r" style="left:952.5px;top:508px;width:7px;height:7px;background:#dcdcdc;"></div>
<div class="r" style="left:924.5px;top:515px;width:7px;height:7px;background:#d6d6d6;"></div>
<div class="r" style="left:931.5px;top:515px;width:7px;height:7px;background:#d4d4d4;"></div>
<div class="r" style="left:938.5px;top:515px;width:7px;height:7px;background:#e2e2e2;"></div>
<div class="r" style="left:945.5px;top:515px;width:7px;height:7px;background:#dedede;"></div>
<div class="r" style="left:952.5px;top:515px;width:7px;height:7px;background:#e4e4e4;"></div>
<div class="r" style="left:1011px;top:504px;width:32px;height:16px;background:#7b2bc7;border-radius:8px;"></div>
<div class="r" style="left:1028px;top:505.5px;width:13px;height:13px;background:#fff;border-radius:50%;"></div>
<svg style="left:1052px;top:503.75px" width="12" height="12" viewBox="0 0 12 12"><g transform="rotate(-45 6 6)" fill="none" stroke="#7b2bc7" stroke-width="1.05" stroke-linecap="round"><path d="M8.4 7.45H10.1A1.85 1.85 0 0 0 10.1 3.75H6.9A1.85 1.85 0 0 0 6.9 7.45H7.2"/><path d="M3.6 4.55H1.9A1.85 1.85 0 0 0 1.9 8.25H5.1A1.85 1.85 0 0 0 5.1 4.55H4.8"/></g></svg>
<div class="r" style="left:1107px;top:504px;width:32px;height:16px;background:#dcdfe6;border-radius:8px;"></div>
<div class="r" style="left:1108.5px;top:505.5px;width:13px;height:13px;background:#fff;border-radius:50%;"></div>
<div class="t" style="left:1203px;top:502.00px;font-size:11.2px;line-height:20px;color:#606266;font-weight:normal;"><span style="color:#7b2bc7">70</span>/3037/62428</div>
<div class="t" style="left:1347px;top:502.00px;font-size:11.2px;line-height:20px;color:#606266;font-weight:normal;">企业招聘</div>
<div class="r" style="left:223px;top:590px;width:695px;height:1px;background:#ebeef5;"></div>
<div class="r" style="left:968px;top:590px;width:597px;height:1px;background:#ebeef5;"></div>
<div class="r" style="left:918px;top:588px;width:50px;height:7px;background:#fafbfd;"></div>
<div class="r" style="left:250px;top:559px;width:11px;height:11px;background:#fff;border:1px solid #dcdfe6;border-radius:2px;box-sizing:border-box;"></div>
<div class="t" style="left:275px;top:554.50px;font-size:11.2px;line-height:20px;color:#7b2bc7;font-weight:normal;">销售代表</div>
<svg style="left:452px;top:556.25px" width="12" height="12" viewBox="0 0 12 12"><g transform="rotate(-45 6 6)" fill="none" stroke="#606266" stroke-width="1.05" stroke-linecap="round"><path d="M8.4 7.45H10.1A1.85 1.85 0 0 0 10.1 3.75H6.9A1.85 1.85 0 0 0 6.9 7.45H7.2"/><path d="M3.6 4.55H1.9A1.85 1.85 0 0 0 1.9 8.25H5.1A1.85 1.85 0 0 0 5.1 4.55H4.8"/></g></svg>
<div class="r" style="left:531px;top:549px;width:136px;height:31px;background:#fff;border:1px solid #dcdfe6;border-radius:4px;box-sizing:border-box;"></div>
<div class="t" style="left:544px;top:554.50px;font-size:11.2px;line-height:20px;color:#606266;font-weight:normal;">简体中文</div>
<svg style="left:648px;top:561.5px" width="8" height="6" viewBox="0 0 8 6"><path d="M0.8 1L4 4.5L7.2 1" fill="none" stroke="#c0c4cc" stroke-width="1"/></svg>
<div class="t" style="left:683px;top:554.50px;width:72px;overflow:hidden;font-size:11.2px;line-height:20px;color:#606266">5000-22000元</div>
<div class="t" style="left:763px;top:554.50px;width:72px;overflow:hidden;font-size:11.2px;line-height:20px;color:#606266">不限</div>
<div class="t" style="left:843px;top:554.50px;width:73px;overflow:hidden;font-size:11.2px;line-height:20px;color:#606266">不限</div>
<div class="r" style="left:924.5px;top:556px;width:7px;height:7px;background:#e6e6e6;"></div>
<div class="r" style="left:931.5px;top:556px;width:7px;height:7px;background:#e4e4e4;"></div>
<div class="r" style="left:938.5px;top:556px;width:7px;height:7px;background:#dcdcdc;"></div>
<div class="r" style="left:945.5px;top:556px;width:7px;height:7px;background:#e6e6e6;"></div>
<div class="r" style="left:952.5px;top:556px;width:7px;height:7px;background:#e8e8e8;"></div>
<div class="r" style="left:924.5px;top:563px;width:7px;height:7px;background:#a8a8a8;"></div>
<div class="r" style="left:931.5px;top:563px;width:7px;height:7px;background:#c8c8c8;"></div>
<div class="r" style="left:938.5px;top:563px;width:7px;height:7px;background:#e4e4e4;"></div>
<div class="r" style="left:945.5px;top:563px;width:7px;height:7px;background:#cfcfcf;"></div>
<div class="r" style="left:952.5px;top:563px;width:7px;height:7px;background:#d8d8d8;"></div>
<div class="r" style="left:924.5px;top:570px;width:7px;height:7px;background:#f6f6f6;"></div>
<div class="r" style="left:931.5px;top:570px;width:7px;height:7px;background:#f2f2f2;"></div>
<div class="r" style="left:938.5px;top:570px;width:7px;height:7px;background:#e4e4e4;"></div>
<div class="r" style="left:945.5px;top:570px;width:7px;height:7px;background:#ececec;"></div>
<div class="r" style="left:952.5px;top:570px;width:7px;height:7px;background:#eeeeee;"></div>
<div class="r" style="left:1011px;top:557px;width:32px;height:16px;background:#7b2bc7;border-radius:8px;"></div>
<div class="r" style="left:1028px;top:558.5px;width:13px;height:13px;background:#fff;border-radius:50%;"></div>
<svg style="left:1052px;top:556.25px" width="12" height="12" viewBox="0 0 12 12"><g transform="rotate(-45 6 6)" fill="none" stroke="#7b2bc7" stroke-width="1.05" stroke-linecap="round"><path d="M8.4 7.45H10.1A1.85 1.85 0 0 0 10.1 3.75H6.9A1.85 1.85 0 0 0 6.9 7.45H7.2"/><path d="M3.6 4.55H1.9A1.85 1.85 0 0 0 1.9 8.25H5.1A1.85 1.85 0 0 0 5.1 4.55H4.8"/></g></svg>
<div class="r" style="left:1107px;top:557px;width:32px;height:16px;background:#dcdfe6;border-radius:8px;"></div>
<div class="r" style="left:1108.5px;top:558.5px;width:13px;height:13px;background:#fff;border-radius:50%;"></div>
<div class="t" style="left:1203px;top:554.50px;font-size:11.2px;line-height:20px;color:#606266;font-weight:normal;"><span style="color:#7b2bc7">17</span>/2653/54698</div>
<div class="t" style="left:1347px;top:554.50px;font-size:11.2px;line-height:20px;color:#606266;font-weight:normal;">企业招聘</div>
<div class="r" style="left:223px;top:643px;width:695px;height:1px;background:#ebeef5;"></div>
<div class="r" style="left:968px;top:643px;width:597px;height:1px;background:#ebeef5;"></div>
<div class="r" style="left:918px;top:640px;width:50px;height:7px;background:#fafbfd;"></div>
<div class="r" style="left:250px;top:612px;width:11px;height:11px;background:#fff;border:1px solid #dcdfe6;border-radius:2px;box-sizing:border-box;"></div>
<div class="t" style="left:275px;top:607.00px;font-size:11.2px;line-height:20px;color:#7b2bc7;font-weight:normal;">商标客服</div>
<svg style="left:452px;top:608.75px" width="12" height="12" viewBox="0 0 12 12"><g transform="rotate(-45 6 6)" fill="none" stroke="#606266" stroke-width="1.05" stroke-linecap="round"><path d="M8.4 7.45H10.1A1.85 1.85 0 0 0 10.1 3.75H6.9A1.85 1.85 0 0 0 6.9 7.45H7.2"/><path d="M3.6 4.55H1.9A1.85 1.85 0 0 0 1.9 8.25H5.1A1.85 1.85 0 0 0 5.1 4.55H4.8"/></g></svg>
<div class="r" style="left:531px;top:602px;width:136px;height:31px;background:#fff;border:1px solid #dcdfe6;border-radius:4px;box-sizing:border-box;"></div>
<div class="t" style="left:544px;top:607.00px;font-size:11.2px;line-height:20px;color:#606266;font-weight:normal;">简体中文</div>
<svg style="left:648px;top:614.0px" width="8" height="6" viewBox="0 0 8 6"><path d="M0.8 1L4 4.5L7.2 1" fill="none" stroke="#c0c4cc" stroke-width="1"/></svg>
<div class="t" style="left:683px;top:607.00px;width:72px;overflow:hidden;font-size:11.2px;line-height:20px;color:#606266">4000-18000元</div>
<div class="t" style="left:763px;top:607.00px;width:72px;overflow:hidden;font-size:11.2px;line-height:20px;color:#606266">不限</div>
<div class="t" style="left:843px;top:607.00px;width:73px;overflow:hidden;font-size:11.2px;line-height:20px;color:#606266">本科</div>
<div class="r" style="left:924.5px;top:612px;width:7px;height:7px;background:#b5b5b5;"></div>
<div class="r" style="left:931.5px;top:612px;width:7px;height:7px;background:#d2d2d2;"></div>
<div class="r" style="left:938.5px;top:612px;width:7px;height:7px;background:#d0d0d0;"></div>
<div class="r" style="left:945.5px;top:612px;width:7px;height:7px;background:#d4d4d4;"></div>
<div class="r" style="left:952.5px;top:612px;width:7px;height:7px;background:#dcdcdc;"></div>
<div class="r" style="left:924.5px;top:619px;width:7px;height:7px;background:#d6d6d6;"></div>
<div class="r" style="left:931.5px;top:619px;width:7px;height:7px;background:#d4d4d4;"></div>
<div class="r" style="left:938.5px;top:619px;width:7px;height:7px;background:#e2e2e2;"></div>
<div class="r" style="left:945.5px;top:619px;width:7px;height:7px;background:#dedede;"></div>
<div class="r" style="left:952.5px;top:619px;width:7px;height:7px;background:#e4e4e4;"></div>
<div class="r" style="left:1011px;top:609px;width:32px;height:16px;background:#7b2bc7;border-radius:8px;"></div>
<div class="r" style="left:1028px;top:610.5px;width:13px;height:13px;background:#fff;border-radius:50%;"></div>
<svg style="left:1052px;top:608.75px" width="12" height="12" viewBox="0 0 12 12"><g transform="rotate(-45 6 6)" fill="none" stroke="#7b2bc7" stroke-width="1.05" stroke-linecap="round"><path d="M8.4 7.45H10.1A1.85 1.85 0 0 0 10.1 3.75H6.9A1.85 1.85 0 0 0 6.9 7.45H7.2"/><path d="M3.6 4.55H1.9A1.85 1.85 0 0 0 1.9 8.25H5.1A1.85 1.85 0 0 0 5.1 4.55H4.8"/></g></svg>
<div class="r" style="left:1107px;top:609px;width:32px;height:16px;background:#dcdfe6;border-radius:8px;"></div>
<div class="r" style="left:1108.5px;top:610.5px;width:13px;height:13px;background:#fff;border-radius:50%;"></div>
<div class="t" style="left:1203px;top:607.00px;font-size:11.2px;line-height:20px;color:#606266;font-weight:normal;"><span style="color:#7b2bc7">7</span>/2782/57720</div>
<div class="t" style="left:1347px;top:607.00px;font-size:11.2px;line-height:20px;color:#606266;font-weight:normal;">企业招聘</div>
<div class="r" style="left:223px;top:696px;width:695px;height:1px;background:#ebeef5;"></div>
<div class="r" style="left:968px;top:696px;width:597px;height:1px;background:#ebeef5;"></div>
<div class="r" style="left:918px;top:693px;width:50px;height:7px;background:#fafbfd;"></div>
<div class="r" style="left:250px;top:664px;width:11px;height:11px;background:#fff;border:1px solid #dcdfe6;border-radius:2px;box-sizing:border-box;"></div>
<div class="t" style="left:275px;top:659.50px;font-size:11.2px;line-height:20px;color:#7b2bc7;font-weight:normal;">独立网站制作与设计实习生</div>
<svg style="left:452px;top:661.25px" width="12" height="12" viewBox="0 0 12 12"><g transform="rotate(-45 6 6)" fill="none" stroke="#606266" stroke-width="1.05" stroke-linecap="round"><path d="M8.4 7.45H10.1A1.85 1.85 0 0 0 10.1 3.75H6.9A1.85 1.85 0 0 0 6.9 7.45H7.2"/><path d="M3.6 4.55H1.9A1.85 1.85 0 0 0 1.9 8.25H5.1A1.85 1.85 0 0 0 5.1 4.55H4.8"/></g></svg>
<div class="r" style="left:531px;top:654px;width:136px;height:31px;background:#fff;border:1px solid #dcdfe6;border-radius:4px;box-sizing:border-box;"></div>
<div class="t" style="left:544px;top:659.50px;font-size:11.2px;line-height:20px;color:#606266;font-weight:normal;">简体中文</div>
<svg style="left:648px;top:666.5px" width="8" height="6" viewBox="0 0 8 6"><path d="M0.8 1L4 4.5L7.2 1" fill="none" stroke="#c0c4cc" stroke-width="1"/></svg>
<div class="t" style="left:683px;top:659.50px;width:72px;overflow:hidden;font-size:11.2px;line-height:20px;color:#606266">100-350元/天</div>
<div class="t" style="left:763px;top:659.50px;width:72px;overflow:hidden;font-size:11.2px;line-height:20px;color:#606266">不限</div>
<div class="t" style="left:843px;top:659.50px;width:73px;overflow:hidden;font-size:11.2px;line-height:20px;color:#606266">本科</div>
<div class="r" style="left:924.5px;top:661px;width:7px;height:7px;background:#e6e6e6;"></div>
<div class="r" style="left:931.5px;top:661px;width:7px;height:7px;background:#e4e4e4;"></div>
<div class="r" style="left:938.5px;top:661px;width:7px;height:7px;background:#dcdcdc;"></div>
<div class="r" style="left:945.5px;top:661px;width:7px;height:7px;background:#e6e6e6;"></div>
<div class="r" style="left:952.5px;top:661px;width:7px;height:7px;background:#e8e8e8;"></div>
<div class="r" style="left:924.5px;top:668px;width:7px;height:7px;background:#a8a8a8;"></div>
<div class="r" style="left:931.5px;top:668px;width:7px;height:7px;background:#c8c8c8;"></div>
<div class="r" style="left:938.5px;top:668px;width:7px;height:7px;background:#e4e4e4;"></div>
<div class="r" style="left:945.5px;top:668px;width:7px;height:7px;background:#cfcfcf;"></div>
<div class="r" style="left:952.5px;top:668px;width:7px;height:7px;background:#d8d8d8;"></div>
<div class="r" style="left:924.5px;top:675px;width:7px;height:7px;background:#f6f6f6;"></div>
<div class="r" style="left:931.5px;top:675px;width:7px;height:7px;background:#f2f2f2;"></div>
<div class="r" style="left:938.5px;top:675px;width:7px;height:7px;background:#e4e4e4;"></div>
<div class="r" style="left:945.5px;top:675px;width:7px;height:7px;background:#ececec;"></div>
<div class="r" style="left:952.5px;top:675px;width:7px;height:7px;background:#eeeeee;"></div>
<div class="r" style="left:1011px;top:662px;width:32px;height:16px;background:#7b2bc7;border-radius:8px;"></div>
<div class="r" style="left:1028px;top:663.5px;width:13px;height:13px;background:#fff;border-radius:50%;"></div>
<svg style="left:1052px;top:661.25px" width="12" height="12" viewBox="0 0 12 12"><g transform="rotate(-45 6 6)" fill="none" stroke="#7b2bc7" stroke-width="1.05" stroke-linecap="round"><path d="M8.4 7.45H10.1A1.85 1.85 0 0 0 10.1 3.75H6.9A1.85 1.85 0 0 0 6.9 7.45H7.2"/><path d="M3.6 4.55H1.9A1.85 1.85 0 0 0 1.9 8.25H5.1A1.85 1.85 0 0 0 5.1 4.55H4.8"/></g></svg>
<div class="r" style="left:1107px;top:662px;width:32px;height:16px;background:#dcdfe6;border-radius:8px;"></div>
<div class="r" style="left:1108.5px;top:663.5px;width:13px;height:13px;background:#fff;border-radius:50%;"></div>
<div class="t" style="left:1203px;top:659.50px;font-size:11.2px;line-height:20px;color:#606266;font-weight:normal;"><span style="color:#7b2bc7">9</span>/2238/46965</div>
<div class="t" style="left:1347px;top:659.50px;font-size:11.2px;line-height:20px;color:#606266;font-weight:normal;">企业招聘</div>
<div class="r" style="left:223px;top:748px;width:695px;height:1px;background:#ebeef5;"></div>
<div class="r" style="left:968px;top:748px;width:597px;height:1px;background:#ebeef5;"></div>
<div class="r" style="left:918px;top:746px;width:50px;height:7px;background:#fafbfd;"></div>
<div class="r" style="left:250px;top:716px;width:11px;height:11px;background:#fff;border:1px solid #dcdfe6;border-radius:2px;box-sizing:border-box;"></div>
<div class="t" style="left:275px;top:712.00px;font-size:11.2px;line-height:20px;color:#7b2bc7;font-weight:normal;">法务专员</div>
<svg style="left:452px;top:713.75px" width="12" height="12" viewBox="0 0 12 12"><g transform="rotate(-45 6 6)" fill="none" stroke="#606266" stroke-width="1.05" stroke-linecap="round"><path d="M8.4 7.45H10.1A1.85 1.85 0 0 0 10.1 3.75H6.9A1.85 1.85 0 0 0 6.9 7.45H7.2"/><path d="M3.6 4.55H1.9A1.85 1.85 0 0 0 1.9 8.25H5.1A1.85 1.85 0 0 0 5.1 4.55H4.8"/></g></svg>
<div class="r" style="left:531px;top:707px;width:136px;height:31px;background:#fff;border:1px solid #dcdfe6;border-radius:4px;box-sizing:border-box;"></div>
<div class="t" style="left:544px;top:712.00px;font-size:11.2px;line-height:20px;color:#606266;font-weight:normal;">简体中文</div>
<svg style="left:648px;top:719.0px" width="8" height="6" viewBox="0 0 8 6"><path d="M0.8 1L4 4.5L7.2 1" fill="none" stroke="#c0c4cc" stroke-width="1"/></svg>
<div class="t" style="left:683px;top:712.00px;width:72px;overflow:hidden;font-size:11.2px;line-height:20px;color:#606266">4000-6000元/月</div>
<div class="t" style="left:763px;top:712.00px;width:72px;overflow:hidden;font-size:11.2px;line-height:20px;color:#606266">不限</div>
<div class="t" style="left:843px;top:712.00px;width:73px;overflow:hidden;font-size:11.2px;line-height:20px;color:#606266">本科</div>
<div class="r" style="left:924.5px;top:721px;width:7px;height:7px;background:#e8e8e8;"></div>
<div class="r" style="left:1011px;top:714px;width:32px;height:16px;background:#7b2bc7;border-radius:8px;"></div>
<div class="r" style="left:1028px;top:715.5px;width:13px;height:13px;background:#fff;border-radius:50%;"></div>
<svg style="left:1052px;top:713.75px" width="12" height="12" viewBox="0 0 12 12"><g transform="rotate(-45 6 6)" fill="none" stroke="#7b2bc7" stroke-width="1.05" stroke-linecap="round"><path d="M8.4 7.45H10.1A1.85 1.85 0 0 0 10.1 3.75H6.9A1.85 1.85 0 0 0 6.9 7.45H7.2"/><path d="M3.6 4.55H1.9A1.85 1.85 0 0 0 1.9 8.25H5.1A1.85 1.85 0 0 0 5.1 4.55H4.8"/></g></svg>
<div class="r" style="left:1107px;top:714px;width:32px;height:16px;background:#dcdfe6;border-radius:8px;"></div>
<div class="r" style="left:1108.5px;top:715.5px;width:13px;height:13px;background:#fff;border-radius:50%;"></div>
<div class="t" style="left:1203px;top:712.00px;font-size:11.2px;line-height:20px;color:#606266;font-weight:normal;"><span style="color:#7b2bc7">0</span>/2117/44341</div>
<div class="t" style="left:1347px;top:712.00px;font-size:11.2px;line-height:20px;color:#606266;font-weight:normal;">企业招聘</div>
<div class="r" style="left:250px;top:769px;width:11px;height:11px;background:#fff;border:1px solid #dcdfe6;border-radius:2px;box-sizing:border-box;"></div>
<div class="t" style="left:275px;top:764.50px;font-size:11.2px;line-height:20px;color:#7b2bc7;font-weight:normal;">商标流程专员</div>
<svg style="left:452px;top:766.25px" width="12" height="12" viewBox="0 0 12 12"><g transform="rotate(-45 6 6)" fill="none" stroke="#606266" stroke-width="1.05" stroke-linecap="round"><path d="M8.4 7.45H10.1A1.85 1.85 0 0 0 10.1 3.75H6.9A1.85 1.85 0 0 0 6.9 7.45H7.2"/><path d="M3.6 4.55H1.9A1.85 1.85 0 0 0 1.9 8.25H5.1A1.85 1.85 0 0 0 5.1 4.55H4.8"/></g></svg>
<div class="r" style="left:531px;top:759px;width:136px;height:31px;background:#fff;border:1px solid #dcdfe6;border-radius:4px;box-sizing:border-box;"></div>
<div class="t" style="left:544px;top:764.50px;font-size:11.2px;line-height:20px;color:#606266;font-weight:normal;">简体中文</div>
<svg style="left:648px;top:771.5px" width="8" height="6" viewBox="0 0 8 6"><path d="M0.8 1L4 4.5L7.2 1" fill="none" stroke="#c0c4cc" stroke-width="1"/></svg>
<div class="t" style="left:683px;top:764.50px;width:72px;overflow:hidden;font-size:11.2px;line-height:20px;color:#606266">4000-18000元</div>
<div class="t" style="left:763px;top:764.50px;width:72px;overflow:hidden;font-size:11.2px;line-height:20px;color:#606266">1-3年</div>
<div class="t" style="left:843px;top:764.50px;width:73px;overflow:hidden;font-size:11.2px;line-height:20px;color:#606266">大专及以上</div>
<div class="r" style="left:924.5px;top:766px;width:7px;height:7px;background:#e6e6e6;"></div>
<div class="r" style="left:931.5px;top:766px;width:7px;height:7px;background:#e4e4e4;"></div>
<div class="r" style="left:938.5px;top:766px;width:7px;height:7px;background:#dcdcdc;"></div>
<div class="r" style="left:945.5px;top:766px;width:7px;height:7px;background:#e6e6e6;"></div>
<div class="r" style="left:952.5px;top:766px;width:7px;height:7px;background:#e8e8e8;"></div>
<div class="r" style="left:924.5px;top:773px;width:7px;height:7px;background:#a8a8a8;"></div>
<div class="r" style="left:931.5px;top:773px;width:7px;height:7px;background:#c8c8c8;"></div>
<div class="r" style="left:938.5px;top:773px;width:7px;height:7px;background:#e4e4e4;"></div>
<div class="r" style="left:945.5px;top:773px;width:7px;height:7px;background:#cfcfcf;"></div>
<div class="r" style="left:952.5px;top:773px;width:7px;height:7px;background:#d8d8d8;"></div>
<div class="r" style="left:924.5px;top:780px;width:7px;height:7px;background:#f6f6f6;"></div>
<div class="r" style="left:931.5px;top:780px;width:7px;height:7px;background:#f2f2f2;"></div>
<div class="r" style="left:938.5px;top:780px;width:7px;height:7px;background:#e4e4e4;"></div>
<div class="r" style="left:945.5px;top:780px;width:7px;height:7px;background:#ececec;"></div>
<div class="r" style="left:952.5px;top:780px;width:7px;height:7px;background:#eeeeee;"></div>
<div class="r" style="left:1011px;top:767px;width:32px;height:16px;background:#7b2bc7;border-radius:8px;"></div>
<div class="r" style="left:1028px;top:768.5px;width:13px;height:13px;background:#fff;border-radius:50%;"></div>
<svg style="left:1052px;top:766.25px" width="12" height="12" viewBox="0 0 12 12"><g transform="rotate(-45 6 6)" fill="none" stroke="#7b2bc7" stroke-width="1.05" stroke-linecap="round"><path d="M8.4 7.45H10.1A1.85 1.85 0 0 0 10.1 3.75H6.9A1.85 1.85 0 0 0 6.9 7.45H7.2"/><path d="M3.6 4.55H1.9A1.85 1.85 0 0 0 1.9 8.25H5.1A1.85 1.85 0 0 0 5.1 4.55H4.8"/></g></svg>
<div class="r" style="left:1107px;top:767px;width:32px;height:16px;background:#dcdfe6;border-radius:8px;"></div>
<div class="r" style="left:1108.5px;top:768.5px;width:13px;height:13px;background:#fff;border-radius:50%;"></div>
<div class="t" style="left:1203px;top:764.50px;font-size:11.2px;line-height:20px;color:#606266;font-weight:normal;"><span style="color:#7b2bc7">3</span>/2138/44776</div>
<div class="t" style="left:1347px;top:764.50px;font-size:11.2px;line-height:20px;color:#606266;font-weight:normal;">企业招聘</div>
<div class="r" style="left:1413px;top:229px;width:8px;height:581px;background:linear-gradient(90deg,rgba(0,0,0,0),rgba(0,0,0,0.06));"></div>
<div class="r" style="left:1420px;top:276px;width:145px;height:526px;background:#fff;"></div>
<div class="r" style="left:1420px;top:328px;width:145px;height:1px;background:#ebeef5;"></div>
<div class="t" style="left:1430px;top:292.00px;font-size:10.3px;line-height:20px;color:#7b2bc7;font-weight:normal;">编辑</div>
<div class="t" style="left:1459px;top:292.00px;font-size:10.3px;line-height:20px;color:#7b2bc7;font-weight:normal;">删除</div>
<div class="r" style="left:1420px;top:380px;width:145px;height:1px;background:#ebeef5;"></div>
<div class="t" style="left:1430px;top:344.50px;font-size:10.3px;line-height:20px;color:#7b2bc7;font-weight:normal;">编辑</div>
<div class="t" style="left:1459px;top:344.50px;font-size:10.3px;line-height:20px;color:#7b2bc7;font-weight:normal;">删除</div>
<div class="r" style="left:1420px;top:433px;width:145px;height:1px;background:#ebeef5;"></div>
<div class="t" style="left:1430px;top:397.00px;font-size:10.3px;line-height:20px;color:#7b2bc7;font-weight:normal;">编辑</div>
<div class="t" style="left:1459px;top:397.00px;font-size:10.3px;line-height:20px;color:#7b2bc7;font-weight:normal;">删除</div>
<div class="r" style="left:1420px;top:486px;width:145px;height:1px;background:#ebeef5;"></div>
<div class="t" style="left:1430px;top:449.50px;font-size:10.3px;line-height:20px;color:#7b2bc7;font-weight:normal;">编辑</div>
<div class="t" style="left:1459px;top:449.50px;font-size:10.3px;line-height:20px;color:#7b2bc7;font-weight:normal;">删除</div>
<div class="r" style="left:1420px;top:538px;width:145px;height:1px;background:#ebeef5;"></div>
<div class="t" style="left:1430px;top:502.00px;font-size:10.3px;line-height:20px;color:#7b2bc7;font-weight:normal;">编辑</div>
<div class="t" style="left:1459px;top:502.00px;font-size:10.3px;line-height:20px;color:#7b2bc7;font-weight:normal;">删除</div>
<div class="r" style="left:1420px;top:590px;width:145px;height:1px;background:#ebeef5;"></div>
<div class="t" style="left:1430px;top:554.50px;font-size:10.3px;line-height:20px;color:#7b2bc7;font-weight:normal;">编辑</div>
<div class="t" style="left:1459px;top:554.50px;font-size:10.3px;line-height:20px;color:#7b2bc7;font-weight:normal;">删除</div>
<div class="r" style="left:1420px;top:643px;width:145px;height:1px;background:#ebeef5;"></div>
<div class="t" style="left:1430px;top:607.00px;font-size:10.3px;line-height:20px;color:#7b2bc7;font-weight:normal;">编辑</div>
<div class="t" style="left:1459px;top:607.00px;font-size:10.3px;line-height:20px;color:#7b2bc7;font-weight:normal;">删除</div>
<div class="r" style="left:1420px;top:696px;width:145px;height:1px;background:#ebeef5;"></div>
<div class="t" style="left:1430px;top:659.50px;font-size:10.3px;line-height:20px;color:#7b2bc7;font-weight:normal;">编辑</div>
<div class="t" style="left:1459px;top:659.50px;font-size:10.3px;line-height:20px;color:#7b2bc7;font-weight:normal;">删除</div>
<div class="r" style="left:1420px;top:748px;width:145px;height:1px;background:#ebeef5;"></div>
<div class="t" style="left:1430px;top:712.00px;font-size:10.3px;line-height:20px;color:#7b2bc7;font-weight:normal;">编辑</div>
<div class="t" style="left:1459px;top:712.00px;font-size:10.3px;line-height:20px;color:#7b2bc7;font-weight:normal;">删除</div>
<div class="t" style="left:1430px;top:764.50px;font-size:10.3px;line-height:20px;color:#7b2bc7;font-weight:normal;">编辑</div>
<div class="t" style="left:1459px;top:764.50px;font-size:10.3px;line-height:20px;color:#7b2bc7;font-weight:bold;-webkit-text-stroke:0;">推送引流</div>
<div class="t" style="left:1511px;top:764.50px;font-size:10.3px;line-height:20px;color:#7b2bc7;font-weight:normal;">删除</div>
<div class="r" style="left:1100px;top:802px;width:465px;height:8px;background:#c8c8c8;"></div>
<div class="r" style="left:223px;top:802px;width:920px;height:8px;background:#959595;border-radius:4px;"></div>
<div class="r" style="left:918px;top:802px;width:50px;height:6px;background:#b4b4b4;"></div>
<div class="r" style="left:918px;top:808px;width:50px;height:6px;background:#cacaca;"></div>
<div class="r" style="left:247px;top:829px;width:11px;height:11px;background:#fff;border:1px solid #dcdfe6;border-radius:2px;box-sizing:border-box;"></div>
<div class="t" style="left:266.5px;top:825.00px;font-size:11.2px;line-height:20px;color:#606266;font-weight:normal;">全选</div>
<div class="r" style="left:297px;top:822px;width:45px;height:26px;background:#bb8fdd;border-radius:3px;"></div>
<div class="t" style="left:319.5px;top:825.00px;font-size:10.3px;line-height:20px;color:#fff;font-weight:normal;transform:translateX(-50%);">删除</div>
<div class="r" style="left:350px;top:822px;width:64px;height:26px;background:#bb8fdd;border-radius:3px;"></div>
<div class="t" style="left:382.0px;top:825.00px;font-size:10.3px;line-height:20px;color:#fff;font-weight:normal;transform:translateX(-50%);">修改分类</div>
<div class="r" style="left:422px;top:822px;width:65px;height:26px;background:#bb8fdd;border-radius:3px;"></div>
<div class="t" style="left:454.5px;top:825.00px;font-size:10.3px;line-height:20px;color:#fff;font-weight:normal;transform:translateX(-50%);">修改语言</div>
<div class="t" style="left:1211.5px;top:825.00px;font-size:11.2px;line-height:20px;color:#606266;font-weight:normal;">共 13 条</div>
<div class="r" style="left:1262px;top:824px;width:80px;height:22px;background:#fff;border:1px solid #dcdfe6;border-radius:3px;box-sizing:border-box;"></div>
<div class="t" style="left:1277px;top:825.00px;font-size:11.2px;line-height:20px;color:#606266;font-weight:normal;">10条/页</div>
<svg style="left:1328px;top:833px" width="8" height="6" viewBox="0 0 8 6"><path d="M0.8 1L4 4.5L7.2 1" fill="none" stroke="#c0c4cc" stroke-width="1"/></svg>
<svg style="left:1362px;top:829px" width="7" height="11" viewBox="0 0 7 11"><path d="M5.5 1L1.5 5.5L5.5 10" fill="none" stroke="#c0c4cc" stroke-width="1.2"/></svg>
<div class="t" style="left:1393.5px;top:825.00px;font-size:11.2px;line-height:20px;color:#7b2bc7;font-weight:bold;-webkit-text-stroke:0;">1</div>
<div class="t" style="left:1421.5px;top:825.00px;font-size:11.2px;line-height:20px;color:#303133;font-weight:bold;-webkit-text-stroke:0;">2</div>
<svg style="left:1452px;top:829px" width="7" height="11" viewBox="0 0 7 11"><path d="M1.5 1L5.5 5.5L1.5 10" fill="none" stroke="#303133" stroke-width="1.2"/></svg>
<div class="t" style="left:1486px;top:825.00px;font-size:11.2px;line-height:20px;color:#606266;font-weight:normal;">前往</div>
<div class="r" style="left:1511px;top:824px;width:36px;height:22px;background:#fff;border:1px solid #dcdfe6;border-radius:3px;box-sizing:border-box;"></div>
<div class="t" style="left:1526px;top:825.00px;font-size:11.2px;line-height:20px;color:#606266;font-weight:normal;">1</div>
<div class="r" style="left:1575px;top:771.5px;width:7px;height:7px;background:#f0b8e0;"></div>
<div class="r" style="left:1554px;top:778.5px;width:7px;height:7px;background:#fbe0ea;"></div>
<div class="r" style="left:1568px;top:778.5px;width:7px;height:7px;background:#f5cce6;"></div>
<div class="r" style="left:1575px;top:778.5px;width:7px;height:7px;background:#f2b8dc;"></div>
<div class="r" style="left:1554px;top:785.5px;width:7px;height:7px;background:#f8a8c0;"></div>
<div class="r" style="left:1561px;top:785.5px;width:7px;height:7px;background:#f590b0;"></div>
<div class="r" style="left:1568px;top:785.5px;width:7px;height:7px;background:#f088a8;"></div>
<div class="r" style="left:1575px;top:785.5px;width:7px;height:7px;background:#f8b8b0;"></div>
<div class="r" style="left:1582px;top:785.5px;width:7px;height:7px;background:#fde8d8;"></div>
<div class="r" style="left:1568px;top:792.5px;width:7px;height:7px;background:#f87888;"></div>
<div class="r" style="left:1575px;top:792.5px;width:7px;height:7px;background:#fcc8b8;"></div>
<div class="r" style="left:1582px;top:792.5px;width:7px;height:7px;background:#fcc890;"></div>
<div class="r" style="left:1547px;top:799.5px;width:7px;height:7px;background:#e0e0e0;"></div>
<div class="r" style="left:1554px;top:799.5px;width:7px;height:7px;background:#e4e4e4;"></div>
<div class="r" style="left:1561px;top:799.5px;width:7px;height:7px;background:#fdf6f6;"></div>
<div class="r" style="left:1568px;top:799.5px;width:7px;height:7px;background:#fcb0b0;"></div>
<div class="r" style="left:1575px;top:799.5px;width:7px;height:7px;background:#f8f8f8;"></div>
<div class="r" style="left:1582px;top:799.5px;width:7px;height:7px;background:#fafafa;"></div>
<div class="r" style="left:1547px;top:806.5px;width:7px;height:7px;background:#d8d8d8;"></div>
<div class="r" style="left:1554px;top:806.5px;width:7px;height:7px;background:#dadada;"></div>
<div class="r" style="left:1561px;top:806.5px;width:7px;height:7px;background:#e4e4e4;"></div>
<div class="r" style="left:1568px;top:806.5px;width:7px;height:7px;background:#f0f0f0;"></div>
<div class="r" style="left:1575px;top:806.5px;width:7px;height:7px;background:#f6f6f6;"></div>
<div class="r" style="left:1582px;top:806.5px;width:7px;height:7px;background:#fafafa;"></div>
<div class="r" style="left:1554px;top:813.5px;width:7px;height:7px;background:#e0e0e0;"></div>
<div class="r" style="left:1561px;top:813.5px;width:7px;height:7px;background:#e0e0e0;"></div>
<div class="r" style="left:1568px;top:813.5px;width:7px;height:7px;background:#e4e4e4;"></div>
<div class="r" style="left:1575px;top:813.5px;width:7px;height:7px;background:#f2f2f2;"></div>
<div class="r" style="left:1554px;top:820.5px;width:7px;height:7px;background:#8c8c8c;"></div>
<div class="r" style="left:1561px;top:820.5px;width:7px;height:7px;background:#999999;"></div>
<div class="r" style="left:1568px;top:820.5px;width:7px;height:7px;background:#8a8a8a;"></div>
<div class="r" style="left:1575px;top:820.5px;width:7px;height:7px;background:#a0a0a0;"></div>
<div class="r" style="left:1582px;top:820.5px;width:7px;height:7px;background:#909090;"></div>
<div class="r" style="left:1554px;top:827.5px;width:7px;height:7px;background:#cccccc;"></div>
<div class="r" style="left:1561px;top:827.5px;width:7px;height:7px;background:#e8e8e8;"></div>
<div class="r" style="left:1568px;top:827.5px;width:7px;height:7px;background:#e6e6e6;"></div>
<div class="r" style="left:1575px;top:827.5px;width:7px;height:7px;background:#f4f4f4;"></div>
<div class="r" style="left:1554px;top:834.5px;width:7px;height:7px;background:#b0b0b0;"></div>
<div class="r" style="left:1561px;top:834.5px;width:7px;height:7px;background:#f6f6f6;"></div>
</body></html>
